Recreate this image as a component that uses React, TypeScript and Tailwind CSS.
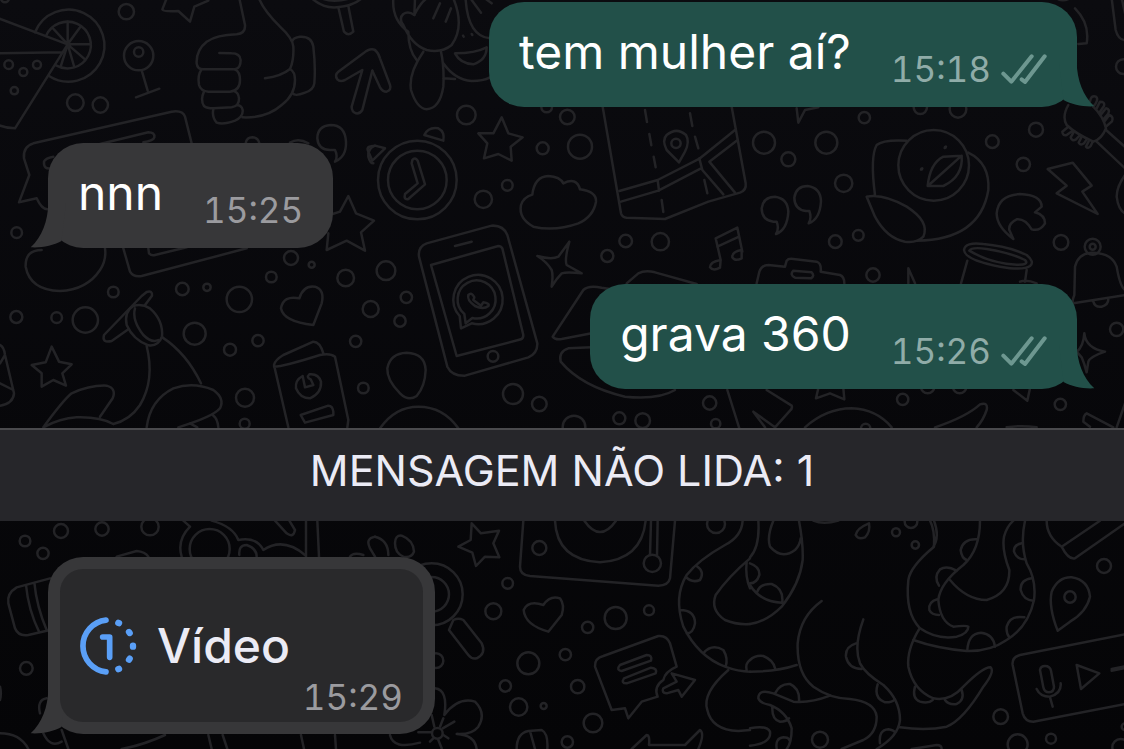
import React from "react";

type Dot = [number, number, number];
type Tile = { x: number; y: number; paths: string[]; dots: Dot[] };

const TILES: Tile[] = [
  {
    x: 0,
    y: 0,
    paths: [
      "M105 97A108 108 0 1 1 147 228M138 108A70 70 0 1 1 168 196",
      "M203 133V65M203 133L243 78M203 133H270M203 133L255 178M203 133L222 198M203 133L182 200M203 133L158 84",
      "M-5 55L203 133L45 385Q20 385 -5 375M-5 160L190 157",
      "M425 211L443 272M408 292L478 266",
      "M500 -5L487 28Q490 36 535 33L570 65L583 20L625 2",
      "M718 -5L735 75Q737 100 710 103Q650 105 620 125Q588 150 590 190Q592 208 610 208H705Q722 205 722 180Q720 160 695 160L658 159",
      "M605 208Q592 225 597 255Q602 273 625 275H690Q720 272 720 240Q720 215 705 208M612 275Q600 300 612 318Q620 325 640 325L695 322Q718 318 717 295Q715 278 705 275",
      "M640 328Q635 350 650 368Q670 375 705 362Q730 350 728 330Q725 316 712 316M728 352Q800 355 845 315Q885 285 885 240Q885 215 870 207Q845 228 795 235",
      "M777 -5Q790 30 840 80Q878 115 880 140Q882 180 870 207M876 125Q880 112 900 110Q935 108 940 140Q947 200 943 250Q940 270 915 278Q885 290 878 280",
      "M1125 150Q1110 143 1090 160L1015 215Q1003 225 1012 238Q1020 247 1035 240L1087 210L1055 320Q1055 335 1068 340Q1080 342 1087 330L1117 212",
      "M575 430L555 350Q548 330 515 335L100 430Q68 440 72 475L88 525L57 607L110 595Q125 628 142 628M155 505Q130 510 132 485Q135 475 160 470M300 432L445 397Q465 397 463 412Q460 422 430 427",
      "M737 430Q740 412 757 412Q775 413 778 430M870 428Q895 412 925 430",
      "M1005 450Q1015 470 1005 485Q1040 470 1038 425Q1035 375 992 375Q952 378 952 415Q955 450 990 450ZM1125 437Q1103 445 1105 470Q1110 490 1120 490",
      "M935 -5Q970 25 1010 22Q1060 18 1085 -5M965 -5Q1000 10 1050 -5M1015 22L1032 95Q1045 110 1060 95L1045 18",
      "M998 642L1020 635L1045 588L1068 640L1122 662L1083 697L1095 752L1040 722L980 750L985 700",
    ],
    dots: [[26, 194, 13], [70, 216, 12], [111, 194, 12], [43, 272, 11], [379, 35, 23], [226, 308, 25], [301, 315, 23], [416, 167, 44], [416, 156, 14], [50, 698, 16], [15, -5, 12]],
  },
  {
    x: 375,
    y: 0,
    paths: [
      "M0 150Q10 158 15 175L45 255Q50 270 35 275Q22 275 15 262L-8 212",
      "M112 480Q120 470 128 482L150 553L100 597Q85 600 90 582L128 550L110 490Z",
      "M148 405Q160 380 190 385Q210 395 205 422ZM-22 450Q-25 438 0 437L30 445L-8 482Z",
      "M55 -5Q50 60 100 95Q100 150 125 180M118 45Q100 32 85 42Q70 55 85 75Q110 135 155 150Q200 160 230 135Q270 80 235 -5",
      "M145 155Q100 220 108 270Q125 325 155 328Q195 325 205 260Q208 200 198 155M205 190Q240 240 290 243Q325 243 345 232M205 235L240 237M272 0Q280 110 345 115",
      "M240 160Q300 160 335 142Q335 180 295 193Q255 190 240 160Z",
      "M195 10L175 55M228 25L212 65M290 0L318 38M120 -5L118 45Q135 10 155 -5M330 -5L350 10",
      "M264 107L266 110M290 102L292 105",
      "M380 352L400 400L443 412L407 440L410 482L370 462L327 475L337 430L310 400L355 400Z",
      "M472 584Q478 530 520 528Q555 530 565 550Q605 530 615 568Q665 575 663 605Q655 650 610 670Q540 695 475 680Q430 655 438 615Q445 592 472 584Z",
      "M683 320L738 640Q742 652 755 653L870 657L1000 605L1095 578Q1115 570 1112 550L1070 320",
      "M733 573L848 540L975 475L1080 390M738 605L850 572L978 505M973 475L982 510L1045 583M848 540L852 572M1085 422L1003 485L1080 578",
      "M810 330L816 366M823 402L829 436M836 470L842 502M860 600L865 636M945 340L952 378M960 410L970 445M988 540L997 580",
      "M912 487L875 450Q860 420 875 405Q905 380 933 405Q945 425 930 455Z",
    ],
    dots: [[127, 540, 118], [127, 540, 88], [903, 430, 14], [274, 345, 28], [577, 351, 22], [503, 445, 18], [615, 440, 36], [397, 556, 16], [325, 598, 26], [515, 321, 16], [752, 723, 19], [856, 725, 26]],
  },
  {
    x: 750,
    y: 0,
    paths: [
      "M470 422Q400 418 380 435Q360 470 375 585M350 590Q400 580 470 620Q540 665 520 710Q500 730 465 725Q410 715 375 650ZM655 458Q720 490 715 570Q690 720 500 722",
      "M635 467L580 470Q540 490 533 558H580Q640 530 635 467L540 552",
      "M585 441L587 443M514 506L516 508M584 444L588 440M513 509L517 505",
      "M140 325L145 368L165 330L205 322",
      "M70 665Q35 660 35 625Q40 590 75 590Q113 595 115 635Q112 690 78 702Q88 685 80 665Z",
      "M168 633Q133 628 133 593Q138 558 173 558Q211 563 213 603Q210 658 176 670Q186 653 178 633Z",
      "M790 717Q740 680 740 640Q745 585 810 582Q875 585 875 620L855 637Q885 645 885 670Q870 695 845 688Q825 655 800 658Q775 670 778 690Z",
      "M893 507L968 488L1025 557L997 575L1043 642L920 580L950 557Z",
      "M955 315Q935 350 950 375Q975 400 1030 425Q1055 418 1068 385Q1060 350 1030 320M1068 390L1130 445M1040 425L1125 505",
      "M955 380L937 395Q938 408 950 405L968 392M972 395L962 412Q966 425 978 418L990 405M995 410L986 428Q992 438 1002 430L1010 418M1016 424L1008 440Q1014 448 1022 438L1028 425",
      "M1020 305Q1022 285 1038 290Q1048 298 1030 320M1040 325L1050 305Q1066 305 1062 318L1048 338M1052 345L1068 325Q1082 328 1074 342L1060 358M1065 362L1078 345Q1092 350 1086 364L1070 378",
      "M1125 525Q1100 560 1100 590Q1105 630 1125 640M975 25Q1020 70 1010 130L985 132M1085 -5L1097 90Q1105 120 1125 120M1115 -5L1125 40M925 -2Q940 5 960 -5",
    ],
    dots: [[551, 496, 106], [42, 428, 33], [229, 428, 33], [115, 478, 21], [281, 550, 26], [343, 353, 17], [511, 322, 20], [624, 328, 25], [727, 425, 19], [858, 389, 21], [820, 493, 20], [256, 725, 19], [325, 706, 16], [933, 727, 22], [1120, 200, 22]],
  },
  {
    x: 0,
    y: 240,
    paths: [
      "M125 30Q75 30 77 80Q90 150 180 153Q260 150 300 90Q320 60 315 25",
      "M370 25L390 95Q400 112 425 108L740 25M445 25L447 40Q455 48 465 45L560 22",
      "M940 255Q850 245 843 205Q850 165 898 175Q910 135 945 140Q975 150 965 190Z",
      "M155 320L177 365L215 373L187 400L198 437L160 420L125 440L125 400L95 375L137 367Z",
      "M435 195L456 167Q458 150 440 156L425 168L312 285Q305 310 335 303L385 268",
      "M400 198Q425 190 450 205Q490 240 486 290Q475 320 445 316Q400 300 380 255Q372 215 400 198ZM405 205Q395 240 430 285Q455 310 475 300",
      "M440 318Q465 420 420 495Q390 540 340 552M487 292Q560 340 603 430M440 562Q450 480 520 445Q580 425 640 450Q675 475 660 505Q640 530 535 562M640 527Q652 535 655 562M570 550L592 562",
      "M130 562Q190 480 215 460Q270 435 320 437Q350 445 338 475L300 530M130 562Q180 535 230 532Q300 530 340 552",
      "M0 315Q12 320 15 345L42 460Q40 490 0 497M0 370L15 345M0 430L40 450",
      "M865 562L822 375Q825 360 850 345L940 305Q960 305 970 340M822 380Q850 380 960 345Q990 338 1005 350L1045 540L1042 562",
      "M908 408Q885 420 888 445Q900 475 930 475Q965 460 963 425Q955 400 928 403Q918 412 932 418L940 435L915 442Z",
      "M902 525L985 497Q998 497 1000 515V525L915 548Z",
    ],
    dots: [[340, 156, 16], [547, 147, 19], [621, 142, 11], [718, 178, 38], [584, 281, 33], [690, 329, 18], [774, 302, 17], [814, 111, 16], [873, 54, 21], [935, 74, 9], [1037, 114, 25], [1112, 207, 24], [1067, 304, 17], [1090, 444, 16], [735, 473, 27], [734, 551, 15], [49, 231, 18], [170, 233, 16], [256, 240, 38]],
  },
  {
    x: 375,
    y: 240,
    paths: [
      "M217 380L132 50Q128 20 155 10L350 -43Q385 -45 397 -15L487 310Q488 340 460 352L270 407Q230 408 217 380Z",
      "M245 348L168 75L370 18Q378 18 382 25L445 285Q445 295 438 298ZM240 18L290 5",
      "M258 265L254 228A74 74 0 1 1 290 250Z",
      "M272 250L268 222A57 57 0 1 1 292 234Z",
      "M280 165Q290 155 298 172L295 180L318 197L325 187Q345 190 340 198Q325 210 300 198Q275 180 280 165Z",
      "M583 5Q568 60 575 75L620 100Q575 95 560 100Q545 115 530 140Q535 105 530 90Q515 65 487 48Q530 60 550 50Z",
      "M95 338Q150 340 152 390Q150 440 125 468Q100 485 75 460Q35 420 37 385Q45 340 95 338ZM15 565Q60 500 130 500Q205 500 250 565",
      "M710 148L680 143Q640 135 625 150L533 290Q540 300 560 297L650 280M755 130L790 100Q810 90 840 97L965 132M650 322L580 325Q550 335 557 365Q620 440 750 470Q850 480 900 450M1057 450L1093 565",
      "M1037 60L1022 -5L1087 -37L1102 35M1027 20L1092 -10M1037 60Q1005 65 1005 82Q1015 95 1035 83ZM1100 30Q1070 35 1072 52Q1080 65 1100 55Z",
    ],
    dots: [[354, 349, 16], [33, 92, 28], [94, 172, 17], [75, 243, 17], [414, 462, 30], [493, 492, 22], [733, 535, 18], [803, 542, 22], [1004, 489, 20], [1022, 551, 14], [697, 48, 18], [597, 561, 34]],
  },
  {
    x: 750,
    y: 240,
    paths: [
      "M970 190Q965 185 973 165L975 80Q985 40 1025 38Q1085 38 1100 80Q1110 140 1125 150M970 190L1125 165M1030 185Q1035 203 1055 200Q1075 195 1075 178",
      "M642 30Q645 5 700 12Q780 20 830 45Q855 65 840 78Q820 92 750 80Q645 60 642 30ZM658 32Q665 20 710 27Q780 38 825 60Q840 75 800 74Q720 70 658 32ZM652 62L633 130M830 90L825 125M810 125Q830 118 860 130",
      "M20 130L28 95Q35 75 55 75L105 80L110 62Q115 55 130 57L200 65Q215 70 212 95L270 105Q283 110 283 130M130 92L185 97Q195 108 183 115L135 113Q118 105 130 92Z",
      "M475 130L475 85L495 130M1003 280Q1008 325 1065 335Q1020 350 1015 365L1010 397Q1003 370 995 352L980 335Q1000 320 1003 280",
      "M50 450L125 497Q128 505 120 512L75 562L10 515L45 562M205 445L198 475L240 460L283 478L280 445M165 562Q230 505 305 505Q380 508 425 562",
      "M555 562Q650 530 690 493Q715 485 710 510Q700 540 680 562M790 450L832 482L840 445M770 562Q815 555 860 562M1090 562L1010 520Q1000 525 1000 545L1020 560M1100 562L1125 490",
    ],
    dots: [[1028, 20, 24], [1028, 20, 9], [369, 105, 20], [458, 478, 17], [931, 493, 17], [1100, 268, 20], [347, 565, 14], [533, 440, 20], [629, 440, 20]],
  },
  {
    x: 0,
    y: 500,
    paths: [
      "M550 62L570 80Q530 120 545 170M635 62Q700 80 715 120Q770 110 790 150Q850 110 915 165M718 165Q715 135 740 135Q770 145 770 170",
      "M825 62L860 100Q880 115 885 90L868 62M918 62V170M952 62L957 170M350 170L410 153Q435 155 445 170M1125 110Q1095 115 1110 145L1125 170M1050 170Q1060 155 1090 165",
      "M150 235L50 262Q20 280 25 310L45 385Q55 410 85 405L150 390M78 255Q85 330 118 397M103 248Q110 320 140 390",
      "M140 595Q110 600 120 640M130 700Q150 745 185 725M185 690L205 747M0 700Q60 700 85 747M365 747Q430 735 495 705M625 705L635 747M668 705L682 747M903 705L912 747M1005 705L1008 747M0 560Q5 580 0 600",
    ],
    dots: [[75, 123, 16], [129, 160, 17], [183, 93, 21], [306, 87, 20], [450, 80, 26], [629, 147, 60], [79, 505, 19]],
  },
  {
    x: 375,
    y: 500,
    paths: [
      "M290 70L318 100L372 92L355 130L373 172L330 170L303 198L292 158L250 140L287 120Z",
      "M445 62L435 200Q435 225 465 228L850 257Q880 257 885 235L900 62M540 62Q545 180 675 187Q800 180 812 62M628 62Q675 130 723 62M828 62L825 165M848 62L846 168",
      "M60 130Q60 105 80 107Q115 120 117 155Q110 175 85 170Q60 160 60 130ZM0 110Q40 120 40 165",
      "M520 395Q450 375 446 330Q460 300 505 315Q525 285 555 295Q570 315 560 345Z",
      "M235 360Q250 352 265 360L320 430Q335 460 305 475Q290 478 280 465L222 390Z",
      "M180 565Q220 570 208 645Q250 590 300 605Q335 640 310 680Q290 705 245 702Q300 705 305 747M45 705Q55 750 135 728M203 685L238 665M205 705L220 715M190 720L200 745M175 715L165 725M170 697H130M178 680L170 645M195 680L205 655",
      "M425 747Q425 700 460 693L500 690Q520 700 517 747M465 693L480 747",
      "M710 630L660 500Q658 475 685 468L850 408Q875 405 885 430L905 500Q870 515 865 540Q835 560 848 590L800 605L760 655L750 625Z",
      "M735 495L815 465Q833 465 828 482L740 513Q722 510 735 495ZM747 535L828 503Q848 505 842 520L755 550Q737 550 747 535ZM865 565L905 545L890 520L960 540L920 590L910 570L875 580Q858 578 865 565Z",
      "M770 747L815 705Q825 705 822 735H930L975 690Q990 700 970 747",
      "M1103 62Q1100 110 1050 135Q970 180 935 225Q895 290 925 380Q970 470 1050 500Q1090 515 1125 515M965 198Q990 215 975 240Q950 250 932 230M915 330Q960 330 960 370Q955 400 935 400M985 460Q1010 430 1045 450Q1060 475 1052 500M1125 480Q1110 490 1115 512",
      "M1125 175Q1060 230 1022 285Q1005 330 1050 360Q1085 375 1125 372M1115 185Q1110 230 1125 265M1060 510Q980 580 997 630Q1010 690 1090 693L1125 690",
    ],
    dots: [[170, 283, 93], [170, 283, 52], [187, 700, 16], [832, 190, 26], [493, 144, 21], [398, 250, 16], [355, 334, 24], [638, 382, 17], [722, 354, 33], [822, 331, 15], [460, 490, 33], [571, 464, 17], [391, 558, 17], [431, 621, 26], [506, 618, 9], [608, 560, 20], [654, 669, 28], [577, 726, 17], [1023, 72, 27], [183, 482, 22]],
  },
  {
    x: 750,
    y: 500,
    paths: [
      "M25 62Q30 140 0 172M70 62Q50 110 60 140Q95 180 135 150Q150 135 152 115M147 62Q160 130 158 180Q150 250 95 320Q50 365 0 372M0 190Q30 200 28 225Q20 250 0 250M0 255Q30 305 95 308M22 275Q30 250 65 252Q100 265 97 305",
      "M215 303Q150 350 143 430Q140 520 190 560Q240 595 300 597Q375 605 380 650Q380 700 340 720L275 747M340 358Q310 440 330 490Q345 520 400 555Q450 600 450 660Q445 710 380 747",
      "M318 430Q285 440 288 470Q295 505 335 507M383 553Q370 595 405 607Q425 608 435 598M390 730Q385 690 415 688Q430 690 435 697M0 515Q80 515 140 495M0 480Q15 465 40 468Q70 480 75 505",
      "M240 587Q180 610 130 605L70 580Q25 565 25 595Q30 610 60 615Q110 635 125 685Q125 730 110 747M75 580Q90 550 120 552Q150 565 147 605M67 620Q65 660 90 665Q110 665 117 655M80 745Q75 715 100 712Q115 712 118 720M0 685Q50 675 60 695Q65 730 0 737",
      "M540 62Q555 90 552 140Q480 200 475 240Q465 340 510 385Q560 420 620 410Q655 400 655 380Q650 375 610 380Q570 365 565 300Q570 250 640 195Q690 150 690 62M552 62Q570 110 550 140",
      "M682 118Q640 115 632 150Q635 175 650 180M620 212Q590 195 570 208Q550 230 567 257M562 298Q535 305 538 330Q545 345 567 345",
      "M600 240Q650 300 710 300Q780 280 778 210Q755 150 762 110Q770 80 790 62M825 62Q810 130 830 190Q860 240 852 300Q835 380 770 420Q720 455 650 453Q560 445 490 420",
      "M815 130Q790 135 792 155Q800 178 825 178M845 235Q810 240 812 270Q820 300 850 302M823 352Q780 345 770 380Q768 400 778 412M652 450Q655 400 693 398Q730 402 735 440",
      "M507 388Q470 450 475 500Q490 570 550 595Q600 605 640 560Q700 500 722 502Q735 515 700 560Q640 660 590 680Q530 693 450 682M495 560Q485 595 510 605Q535 612 548 600M585 600Q595 615 620 612Q645 600 635 570",
      "M357 70Q320 85 317 105Q325 120 345 112Q362 95 357 70Z",
      "M890 62Q890 110 935 140L1050 62M935 140Q955 180 975 175L1125 70",
      "M923 392Q895 320 905 275Q925 230 965 232Q1015 240 1020 290Q1010 335 960 365Z",
      "M1125 403L810 465Q785 472 788 495L818 640Q825 665 850 665L1125 612M870 510Q872 498 885 498Q900 498 903 512L912 560Q912 575 897 577Q883 577 880 562ZM860 567Q870 590 900 590Q935 580 932 550M900 592L908 620M980 495L1048 520L993 567ZM1085 512L1125 504M1085 507L1125 499",
      "M485 747L560 735Q575 735 575 747M190 62Q220 75 265 62",
    ],
    dots: [[438, 97, 12], [496, 135, 11], [483, 65, 19], [1062, 198, 21], [752, 650, 22], [803, 733, 30], [903, 716, 15], [210, 719, 24], [960, 291, 17], [1125, 680, 10], [1112, 742, 25]],
  },
];

function Wallpaper() {
  return (
    <svg
      aria-hidden="true"
      viewBox="0 0 1124 749"
      preserveAspectRatio="xMidYMin slice"
      className="absolute inset-0 h-full w-full"
      fill="none"
      stroke="#232326"
      strokeWidth="7.5"
      strokeLinecap="round"
      strokeLinejoin="round"
    >
      {TILES.map((tile) => (
        <g key={`${tile.x}-${tile.y}`} transform={`translate(${tile.x} ${tile.y}) scale(0.33333)`}>
          {tile.paths.map((d) => (
            <path key={d} d={d} />
          ))}
          {tile.dots.map(([cx, cy, r]) => (
            <circle key={`${cx}-${cy}-${r}`} cx={cx} cy={cy} r={r} />
          ))}
        </g>
      ))}
    </svg>
  );
}

function TailRight() {
  return (
    <svg aria-hidden="true" width="36" height="45" viewBox="0 0 36 45" className="absolute -right-[18px] bottom-0 fill-[#225049]">
      <path d="M17.7 0C18 18 24 34 35.3 44.3C24 45 13 42.500 4.500 38L0 0Z" />
    </svg>
  );
}

function TailLeft() {
  return (
    <svg aria-hidden="true" width="36" height="45" viewBox="0 0 36 45" className="absolute -left-[18px] bottom-0 fill-[#373739]">
      <path d="M18.300 0C18 18 12 34 .7 44.300C12 45 23 42.500 31.500 38L36 0Z" />
    </svg>
  );
}

function Ticks() {
  return (
    <svg
      role="img"
      aria-label="Entregue"
      width="46"
      height="30"
      viewBox="754 159 138 90"
      fill="none"
      stroke="#6d9790"
      strokeWidth="12"
      strokeLinecap="round"
      strokeLinejoin="round"
      className="ml-2.5"
    >
      <path d="M761 218L785 242L846 166M816 235L826 243L885 166" />
    </svg>
  );
}

function Sent({ text, time }: { text: string; time: string }) {
  return (
    <li className="relative mr-[47px] flex h-[105px] items-end self-end rounded-[35px] bg-[#225049] pr-[30px] pl-[30px]">
      <TailRight />
      <p className="relative pb-[25px] text-[48px] leading-[60px] text-white">{text}</p>
      <div className="relative ml-10 flex items-center pb-[22px] text-[#90aca8]">
        <time className="text-[35px] leading-[32px] tabular-nums">{time}</time>
        <Ticks />
      </div>
    </li>
  );
}

function Received({ text, time }: { text: string; time: string }) {
  return (
    <li className="relative ml-12 flex h-[105px] items-end self-start rounded-[35px] bg-[#373739] pr-[30px] pl-[30px]">
      <TailLeft />
      <p className="relative pb-[25px] text-[48px] leading-[60px] text-white">{text}</p>
      <time className="relative ml-10 pb-[22px] text-[35px] leading-[32px] text-[#9b9b9f] tabular-nums">{time}</time>
    </li>
  );
}

function OnceIcon() {
  return (
    <svg aria-hidden="true" width="58" height="58" viewBox="238 351 174 174" fill="none" stroke="#5a9ff7" strokeWidth="17" strokeLinecap="round" strokeLinejoin="round">
      <path d="M319 360.500A78 78 0 0 0 319 515.500M309 411H330V472" />
      <path d="M356 368.500L358 369.500M388 396L390 399M400 437V440M390 476L388 479M358 506.500L356 507.500" strokeWidth="19" />
    </svg>
  );
}

export default function App() {
  return (
    <main className="relative min-h-screen overflow-hidden bg-[#08080b] bg-linear-to-b from-[#0b0b0f] to-[#050507] font-['Inter','Liberation_Sans',sans-serif]">
      <Wallpaper />
      <div className="relative">
        <ul className="flex flex-col gap-9 pt-0.5">
          <Sent text="tem mulher aí?" time="15:18" />
          <Received text="nnn" time="15:25" />
          <Sent text="grava 360" time="15:26" />
        </ul>
        <h2 className="mt-[39px] h-[93px] border-t-2 border-[#4a4a4d] bg-[#26262a] pt-3 text-center text-[43px] leading-[56px] text-[#ebebf5]">
          MENSAGEM NÃO LIDA: 1
        </h2>
        <ul className="flex flex-col pt-9 pb-[15px]">
          <li className="relative ml-12 self-start rounded-[35px] bg-[#373739] p-3">
            <TailLeft />
            <button type="button" className="relative flex h-[153px] w-[363px] flex-col rounded-[23px] bg-[#29292b] pr-5 pl-[19px] text-left">
              <span className="flex items-center gap-5 pt-12 text-[48px] leading-[58px] font-medium text-[#ebebf5]">
                <OnceIcon />
                Vídeo
              </span>
              <time className="self-end pt-1 text-[35px] leading-[36px] text-[#9b9b9f] tabular-nums">15:29</time>
            </button>
          </li>
        </ul>
      </div>
    </main>
  );
}
